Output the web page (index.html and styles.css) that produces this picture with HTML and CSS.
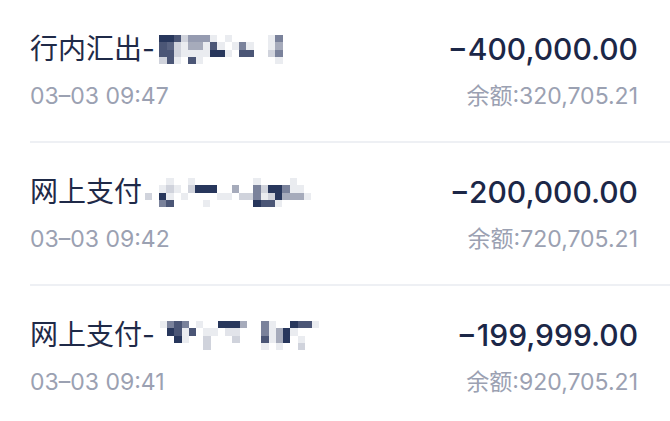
FILE: index.html
```html
<!DOCTYPE html>
<html lang="zh-CN">
<head>
  <meta charset="UTF-8">
  <meta name="viewport" content="width=device-width, initial-scale=1.0">
  <title>交易明细</title>
  <link rel="stylesheet" href="styles.css">
</head>
<body>
  <main class="records">
    <div class="record">
      <div class="record-main">
        <div class="record-title">行内汇出-<svg class="mosaic" width="124" height="29" viewBox="0 0 17 4" shape-rendering="crispEdges">
          <rect x="0" y="0" width="2" height="1" fill="#28375c"/><rect x="2" y="0" width="1" height="1" fill="#4b5676"/><rect x="3" y="0" width="1" height="1" fill="#d0d3dc"/><rect x="4" y="0" width="3" height="1" fill="#959bb0"/><rect x="7" y="0" width="1" height="1" fill="#eaecf0"/><rect x="9" y="0" width="1" height="1" fill="#eaecf0"/><rect x="15" y="0" width="1" height="1" fill="#eaecf0"/><rect x="16" y="0" width="1" height="1" fill="#7a829b"/>
          <rect x="0" y="1" width="1" height="1" fill="#4b5676"/><rect x="1" y="1" width="1" height="1" fill="#5a6482"/><rect x="2" y="1" width="1" height="1" fill="#d0d3dc"/><rect x="3" y="1" width="1" height="1" fill="#eaecf0"/><rect x="4" y="1" width="2" height="1" fill="#a6abbb"/><rect x="6" y="1" width="1" height="1" fill="#eaecf0"/><rect x="7" y="1" width="1" height="1" fill="#4b5676"/><rect x="8" y="1" width="1" height="1" fill="#eaecf0"/><rect x="10" y="1" width="1" height="1" fill="#eaecf0"/><rect x="11" y="1" width="1" height="1" fill="#7a829b"/><rect x="12" y="1" width="1" height="1" fill="#eaecf0"/><rect x="15" y="1" width="1" height="1" fill="#eaecf0"/><rect x="16" y="1" width="1" height="1" fill="#a6abbb"/>
          <rect x="0" y="2" width="2" height="1" fill="#4b5676"/><rect x="2" y="2" width="1" height="1" fill="#d0d3dc"/><rect x="3" y="2" width="4" height="1" fill="#eaecf0"/><rect x="7" y="2" width="2" height="1" fill="#28375c"/><rect x="9" y="2" width="1" height="1" fill="#eaecf0"/><rect x="11" y="2" width="2" height="1" fill="#4b5676"/><rect x="15" y="2" width="1" height="1" fill="#d0d3dc"/><rect x="16" y="2" width="1" height="1" fill="#7a829b"/>
          <rect x="0" y="3" width="1" height="1" fill="#d0d3dc"/><rect x="1" y="3" width="1" height="1" fill="#4b5676"/><rect x="2" y="3" width="1" height="1" fill="#eaecf0"/><rect x="4" y="3" width="1" height="1" fill="#4b5676"/><rect x="5" y="3" width="1" height="1" fill="#eaecf0"/><rect x="16" y="3" width="1" height="1" fill="#eaecf0"/>
        </svg></div>
        <div class="record-time">03–03 09:47</div>
      </div>
      <div class="record-side">
        <div class="record-amount">−400,000.00</div>
        <div class="record-balance">余额:320,705.21</div>
      </div>
    </div>

    <div class="record">
      <div class="record-main">
        <div class="record-title">网上支付<svg class="mosaic mosaic-wide" width="168" height="29" viewBox="0 0 23 4" shape-rendering="crispEdges">
          <rect x="3" y="0" width="1" height="1" fill="#eaecf0"/><rect x="6" y="0" width="1" height="1" fill="#eaecf0"/><rect x="15" y="0" width="1" height="1" fill="#eaecf0"/><rect x="20" y="0" width="1" height="1" fill="#eaecf0"/>
          <rect x="2" y="1" width="1" height="1" fill="#eaecf0"/><rect x="3" y="1" width="1" height="1" fill="#d0d3dc"/><rect x="4" y="1" width="1" height="1" fill="#eaecf0"/><rect x="6" y="1" width="1" height="1" fill="#d0d3dc"/><rect x="7" y="1" width="3" height="1" fill="#28375c"/><rect x="12" y="1" width="1" height="1" fill="#a6abbb"/><rect x="15" y="1" width="1" height="1" fill="#7a829b"/><rect x="16" y="1" width="1" height="1" fill="#d0d3dc"/><rect x="17" y="1" width="2" height="1" fill="#28375c"/><rect x="19" y="1" width="1" height="1" fill="#7a829b"/><rect x="20" y="1" width="2" height="1" fill="#eaecf0"/>
          <rect x="0" y="2" width="1" height="1" fill="#d0d3dc"/><rect x="2" y="2" width="1" height="1" fill="#28375c"/><rect x="3" y="2" width="1" height="1" fill="#eaecf0"/><rect x="5" y="2" width="1" height="1" fill="#eaecf0"/><rect x="10" y="2" width="2" height="1" fill="#eaecf0"/><rect x="13" y="2" width="2" height="1" fill="#d0d3dc"/><rect x="15" y="2" width="1" height="1" fill="#7a829b"/><rect x="16" y="2" width="1" height="1" fill="#eaecf0"/><rect x="17" y="2" width="1" height="1" fill="#d0d3dc"/><rect x="18" y="2" width="1" height="1" fill="#28375c"/><rect x="19" y="2" width="3" height="1" fill="#a6abbb"/><rect x="22" y="2" width="1" height="1" fill="#eaecf0"/>
          <rect x="2" y="3" width="1" height="1" fill="#7a829b"/><rect x="3" y="3" width="1" height="1" fill="#4b5676"/><rect x="8" y="3" width="1" height="1" fill="#eaecf0"/><rect x="15" y="3" width="1" height="1" fill="#28375c"/><rect x="16" y="3" width="2" height="1" fill="#4b5676"/><rect x="18" y="3" width="1" height="1" fill="#eaecf0"/>
        </svg></div>
        <div class="record-time">03–03 09:42</div>
      </div>
      <div class="record-side">
        <div class="record-amount">−200,000.00</div>
        <div class="record-balance">余额:720,705.21</div>
      </div>
    </div>

    <div class="record">
      <div class="record-main">
        <div class="record-title">网上支付-<svg class="mosaic" width="161" height="29" viewBox="0 0 22 4" shape-rendering="crispEdges">
          <rect x="0" y="0" width="1" height="1" fill="#eaecf0"/><rect x="1" y="0" width="1" height="1" fill="#7a829b"/><rect x="2" y="0" width="1" height="1" fill="#4b5676"/><rect x="3" y="0" width="1" height="1" fill="#7a829b"/><rect x="5" y="0" width="1" height="1" fill="#eaecf0"/><rect x="8" y="0" width="3" height="1" fill="#28375c"/><rect x="11" y="0" width="1" height="1" fill="#a6abbb"/><rect x="14" y="0" width="1" height="1" fill="#7a829b"/><rect x="15" y="0" width="1" height="1" fill="#eaecf0"/><rect x="18" y="0" width="1" height="1" fill="#28375c"/><rect x="19" y="0" width="2" height="1" fill="#4b5676"/><rect x="21" y="0" width="1" height="1" fill="#eaecf0"/>
          <rect x="1" y="1" width="1" height="1" fill="#28375c"/><rect x="2" y="1" width="1" height="1" fill="#4b5676"/><rect x="3" y="1" width="1" height="1" fill="#eaecf0"/><rect x="4" y="1" width="1" height="1" fill="#4b5676"/><rect x="6" y="1" width="2" height="1" fill="#eaecf0"/><rect x="9" y="1" width="2" height="1" fill="#e2e4ea"/><rect x="14" y="1" width="1" height="1" fill="#7a829b"/><rect x="15" y="1" width="1" height="1" fill="#eaecf0"/><rect x="16" y="1" width="1" height="1" fill="#a6abbb"/><rect x="17" y="1" width="1" height="1" fill="#28375c"/><rect x="18" y="1" width="1" height="1" fill="#eaecf0"/>
          <rect x="2" y="2" width="1" height="1" fill="#28375c"/><rect x="3" y="2" width="1" height="1" fill="#eaecf0"/><rect x="6" y="2" width="1" height="1" fill="#d0d3dc"/><rect x="10" y="2" width="1" height="1" fill="#d0d3dc"/><rect x="14" y="2" width="1" height="1" fill="#4b5676"/><rect x="15" y="2" width="1" height="1" fill="#eaecf0"/><rect x="16" y="2" width="1" height="1" fill="#a6abbb"/><rect x="17" y="2" width="1" height="1" fill="#28375c"/><rect x="19" y="2" width="1" height="1" fill="#eaecf0"/>
          <rect x="6" y="3" width="1" height="1" fill="#d0d3dc"/><rect x="14" y="3" width="1" height="1" fill="#eaecf0"/><rect x="16" y="3" width="1" height="1" fill="#eaecf0"/><rect x="19" y="3" width="1" height="1" fill="#d0d3dc"/>
        </svg></div>
        <div class="record-time">03–03 09:41</div>
      </div>
      <div class="record-side">
        <div class="record-amount">−199,999.00</div>
        <div class="record-balance">余额:920,705.21</div>
      </div>
    </div>
  </main>
</body>
</html>
```

FILE: styles.css
```css
* {
  margin: 0;
  padding: 0;
  box-sizing: border-box;
}

body {
  background: #fff;
  font-family: Inter, "Noto Sans CJK SC", sans-serif;
  color: #1f2a48;
}

.records {
  display: flex;
  flex-direction: column;
}

.record {
  display: flex;
  justify-content: space-between;
  margin-left: 30px;
  padding: 29px 32px 28px 0;
  border-bottom: 2px solid #eef0f4;
}

.record-main,
.record-side {
  display: flex;
  flex-direction: column;
  gap: 10px;
}

.record-side {
  align-items: flex-end;
}

.record-title {
  display: flex;
  align-items: center;
  height: 40px;
  font-size: 28px;
  line-height: 40px;
  color: #1f2a48;
}

.mosaic {
  display: block;
  margin-left: 4px;
}

.mosaic-wide {
  margin-left: 2px;
}

.record-time,
.record-balance {
  height: 34px;
  font-size: 23px;
  line-height: 34px;
  color: #9ba1b2;
}

.record-amount {
  height: 40px;
  font-size: 30px;
  font-weight: 500;
  line-height: 40px;
  color: #1c2747;
}
```
